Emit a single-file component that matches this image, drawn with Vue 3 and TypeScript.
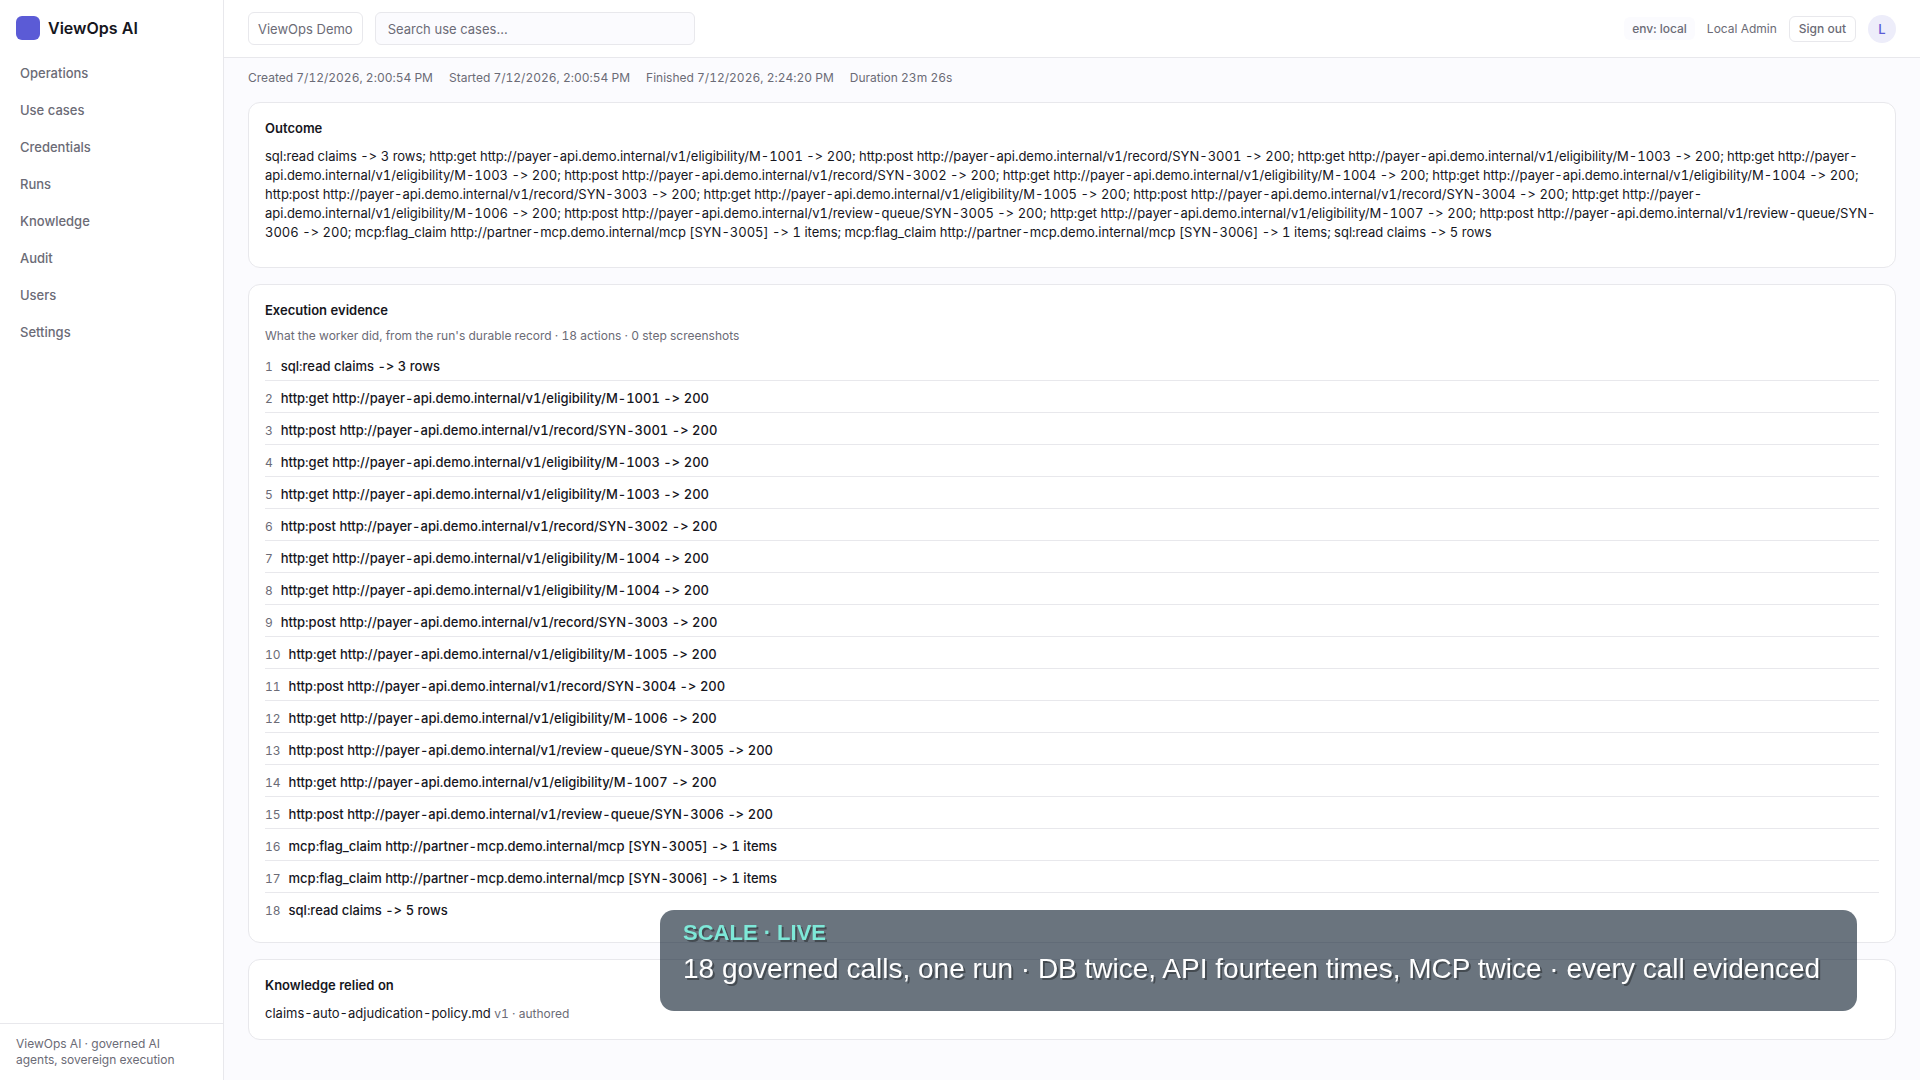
<script setup lang="ts">
import { ref } from 'vue'

interface NavItem {
  label: string
  href: string
}

const navItems: NavItem[] = [
  { label: 'Operations', href: '#operations' },
  { label: 'Use cases', href: '#use-cases' },
  { label: 'Credentials', href: '#credentials' },
  { label: 'Runs', href: '#runs' },
  { label: 'Knowledge', href: '#knowledge' },
  { label: 'Audit', href: '#audit' },
  { label: 'Users', href: '#users' },
  { label: 'Settings', href: '#settings' },
]

const runMeta: string[] = [
  'Created 7/12/2026, 2:00:54 PM',
  'Started 7/12/2026, 2:00:54 PM',
  'Finished 7/12/2026, 2:24:20 PM',
  'Duration 23m 26s',
]

const api = 'http://payer-api.demo.internal/v1'
const mcp = 'http://partner-mcp.demo.internal/mcp'

const actions: string[] = [
  'sql:read claims -> 3 rows',
  `http:get ${api}/eligibility/M-1001 -> 200`,
  `http:post ${api}/record/SYN-3001 -> 200`,
  `http:get ${api}/eligibility/M-1003 -> 200`,
  `http:get ${api}/eligibility/M-1003 -> 200`,
  `http:post ${api}/record/SYN-3002 -> 200`,
  `http:get ${api}/eligibility/M-1004 -> 200`,
  `http:get ${api}/eligibility/M-1004 -> 200`,
  `http:post ${api}/record/SYN-3003 -> 200`,
  `http:get ${api}/eligibility/M-1005 -> 200`,
  `http:post ${api}/record/SYN-3004 -> 200`,
  `http:get ${api}/eligibility/M-1006 -> 200`,
  `http:post ${api}/review-queue/SYN-3005 -> 200`,
  `http:get ${api}/eligibility/M-1007 -> 200`,
  `http:post ${api}/review-queue/SYN-3006 -> 200`,
  `mcp:flag_claim ${mcp} [SYN-3005] -> 1 items`,
  `mcp:flag_claim ${mcp} [SYN-3006] -> 1 items`,
  'sql:read claims -> 5 rows',
]

const outcome = actions.join('; ')
const query = ref('')
</script>

<template>
  <div class="shell">
    <aside class="sidebar">
      <div class="brand">
        <span class="brand-mark" aria-hidden="true"></span>
        <span class="brand-name">ViewOps AI</span>
      </div>
      <nav class="nav" aria-label="Main">
        <a v-for="item in navItems" :key="item.label" class="nav-link" :href="item.href">{{ item.label }}</a>
      </nav>
      <footer class="sidebar-footer">ViewOps AI · governed AI agents, sovereign execution</footer>
    </aside>

    <div class="main">
      <header class="topbar">
        <button type="button" class="workspace">ViewOps Demo</button>
        <input v-model="query" class="search" type="search" placeholder="Search use cases..." aria-label="Search use cases" />
        <div class="account">
          <span class="env">env: local</span>
          <span class="user-name">Local Admin</span>
          <button type="button" class="sign-out">Sign out</button>
          <span class="avatar">L</span>
        </div>
      </header>

      <main class="content">
        <div class="meta">
          <span v-for="entry in runMeta" :key="entry">{{ entry }}</span>
        </div>

        <section class="card outcome">
          <h2 class="card-title">Outcome</h2>
          <p class="text">{{ outcome }}</p>
        </section>

        <section class="card evidence">
          <h2 class="card-title">Execution evidence</h2>
          <p class="hint">What the worker did, from the run's durable record · 18 actions · 0 step screenshots</p>
          <ol class="steps">
            <li v-for="(action, i) in actions" :key="i" class="step">
              <span class="step-index">{{ i + 1 }}</span>
              <span class="step-text">{{ action }}</span>
            </li>
          </ol>
        </section>

        <section class="card">
          <h2 class="card-title">Knowledge relied on</h2>
          <p class="text">claims-auto-adjudication-policy.md <span class="muted">v1 · authored</span></p>
        </section>
      </main>
    </div>

    <div class="caption">
      <strong class="caption-tag">SCALE · LIVE</strong>
      <span class="caption-text">18 governed calls, one run · DB twice, API fourteen times, MCP twice · every call evidenced</span>
    </div>
  </div>
</template>

<style>
body {
  background: #fbfbfe;
}
</style>

<style scoped>
.shell {
  --line: #e8e8ec;
  --ink: #16161d;
  --muted: #6b6b76;
  display: flex;
  min-height: 100vh;
  box-sizing: border-box;
  background: #fbfbfe;
  color: var(--ink);
  font-family: Inter, "Liberation Sans", sans-serif;
  font-size: 13px;
  font-variant-ligatures: no-contextual;
  font-variant-numeric: tabular-nums;
  line-height: 19px;
}

.shell *,
.shell *::before {
  box-sizing: border-box;
}

.sidebar {
  display: flex;
  flex-direction: column;
  flex: 0 0 224px;
  background: #ffffff;
  border-right: 1px solid var(--line);
}

.brand {
  display: flex;
  align-items: center;
  gap: 8px;
  padding: 16px 16px 12px;
}

.brand-mark {
  width: 24px;
  height: 24px;
  border-radius: 6px;
  background: #5b5bd6;
}

.brand-name {
  font-size: 16px;
  line-height: 24px;
  font-weight: 600;
}

.nav {
  display: flex;
  flex-direction: column;
  gap: 2px;
  padding: 4px 8px;
}

.nav-link {
  padding: 8px 12px;
  border-radius: 6px;
  color: var(--muted);
  font-weight: 500;
  text-decoration: none;
}

.sidebar-footer {
  margin-top: auto;
  padding: 12px 24px 12px 16px;
  border-top: 1px solid var(--line);
  color: var(--muted);
  font-size: 12px;
  line-height: 16px;
}

.main {
  display: flex;
  flex-direction: column;
  flex: 1;
  min-width: 0;
}

.topbar {
  display: flex;
  align-items: center;
  gap: 12px;
  padding: 12px 24px;
  background: #ffffff;
  border-bottom: 1px solid var(--line);
}

.workspace,
.search,
.sign-out {
  margin: 0;
  border: 1px solid var(--line);
  border-radius: 6px;
  background: #ffffff;
  color: var(--muted);
  font-family: inherit;
}

.workspace {
  height: 33px;
  padding: 0 9px;
  font-size: 13px;
}

.search {
  width: 320px;
  height: 33px;
  padding: 0 12px;
  background: #fbfbfe;
  font-size: 13px;
  appearance: none;
}

.search::placeholder {
  color: var(--muted);
  opacity: 1;
}

.account {
  display: flex;
  align-items: center;
  gap: 12px;
  margin-left: auto;
  color: var(--muted);
  font-size: 12px;
}

.env {
  padding: 2px 8px;
  border-radius: 6px;
  background: #fbfbfe;
  font-weight: 500;
}

.sign-out {
  height: 26px;
  padding: 0 9px;
  font-size: 12px;
  font-weight: 500;
}

.avatar {
  width: 28px;
  height: 28px;
  border-radius: 50%;
  background: #ededfa;
  color: #5b5bd6;
  font-size: 13px;
  font-weight: 500;
  line-height: 28px;
  text-align: center;
}

.content {
  display: flex;
  flex-direction: column;
  gap: 16px;
  padding: 12px 24px 32px;
}

.meta {
  display: flex;
  flex-wrap: wrap;
  gap: 16px;
  color: var(--muted);
  font-size: 12px;
  line-height: 16px;
}

.card {
  padding: 16px;
  background: #ffffff;
  border: 1px solid var(--line);
  border-radius: 12px;
}

.outcome {
  padding-bottom: 25px;
}

.card-title {
  margin: 0 0 8px;
  font-size: 13px;
  line-height: 18px;
  font-weight: 600;
}

.text {
  margin: 0;
  padding-top: 2px;
}

.hint {
  margin: 0;
  line-height: 17px;
}

.hint,
.muted,
.step-index {
  color: var(--muted);
  font-size: 12px;
}

.steps {
  margin: 5px 0 0;
  padding: 0;
  list-style: none;
}

.step {
  display: flex;
  align-items: baseline;
  gap: 8px;
  padding: 8px 0 4px;
  border-bottom: 1px solid var(--line);
}

.step:last-child {
  padding-bottom: 6px;
  border-bottom: 0;
}

.step-text {
  font-weight: 500;
}

.caption {
  position: fixed;
  right: 63px;
  bottom: 69px;
  display: flex;
  flex-direction: column;
  gap: 5px;
  min-width: 1197px;
  padding: 10px 23px 24px;
  border-radius: 14px;
  background: rgba(15, 30, 46, 0.62);
  font-family: "Liberation Sans", Arial, sans-serif;
  text-shadow: 2px 2px 0 rgba(0, 0, 0, 0.35);
}

.caption-tag {
  color: #7ee8d8;
  font-size: 22px;
  line-height: 26px;
}

.caption-text {
  color: #ffffff;
  font-size: 28px;
  line-height: 36px;
}
</style>
